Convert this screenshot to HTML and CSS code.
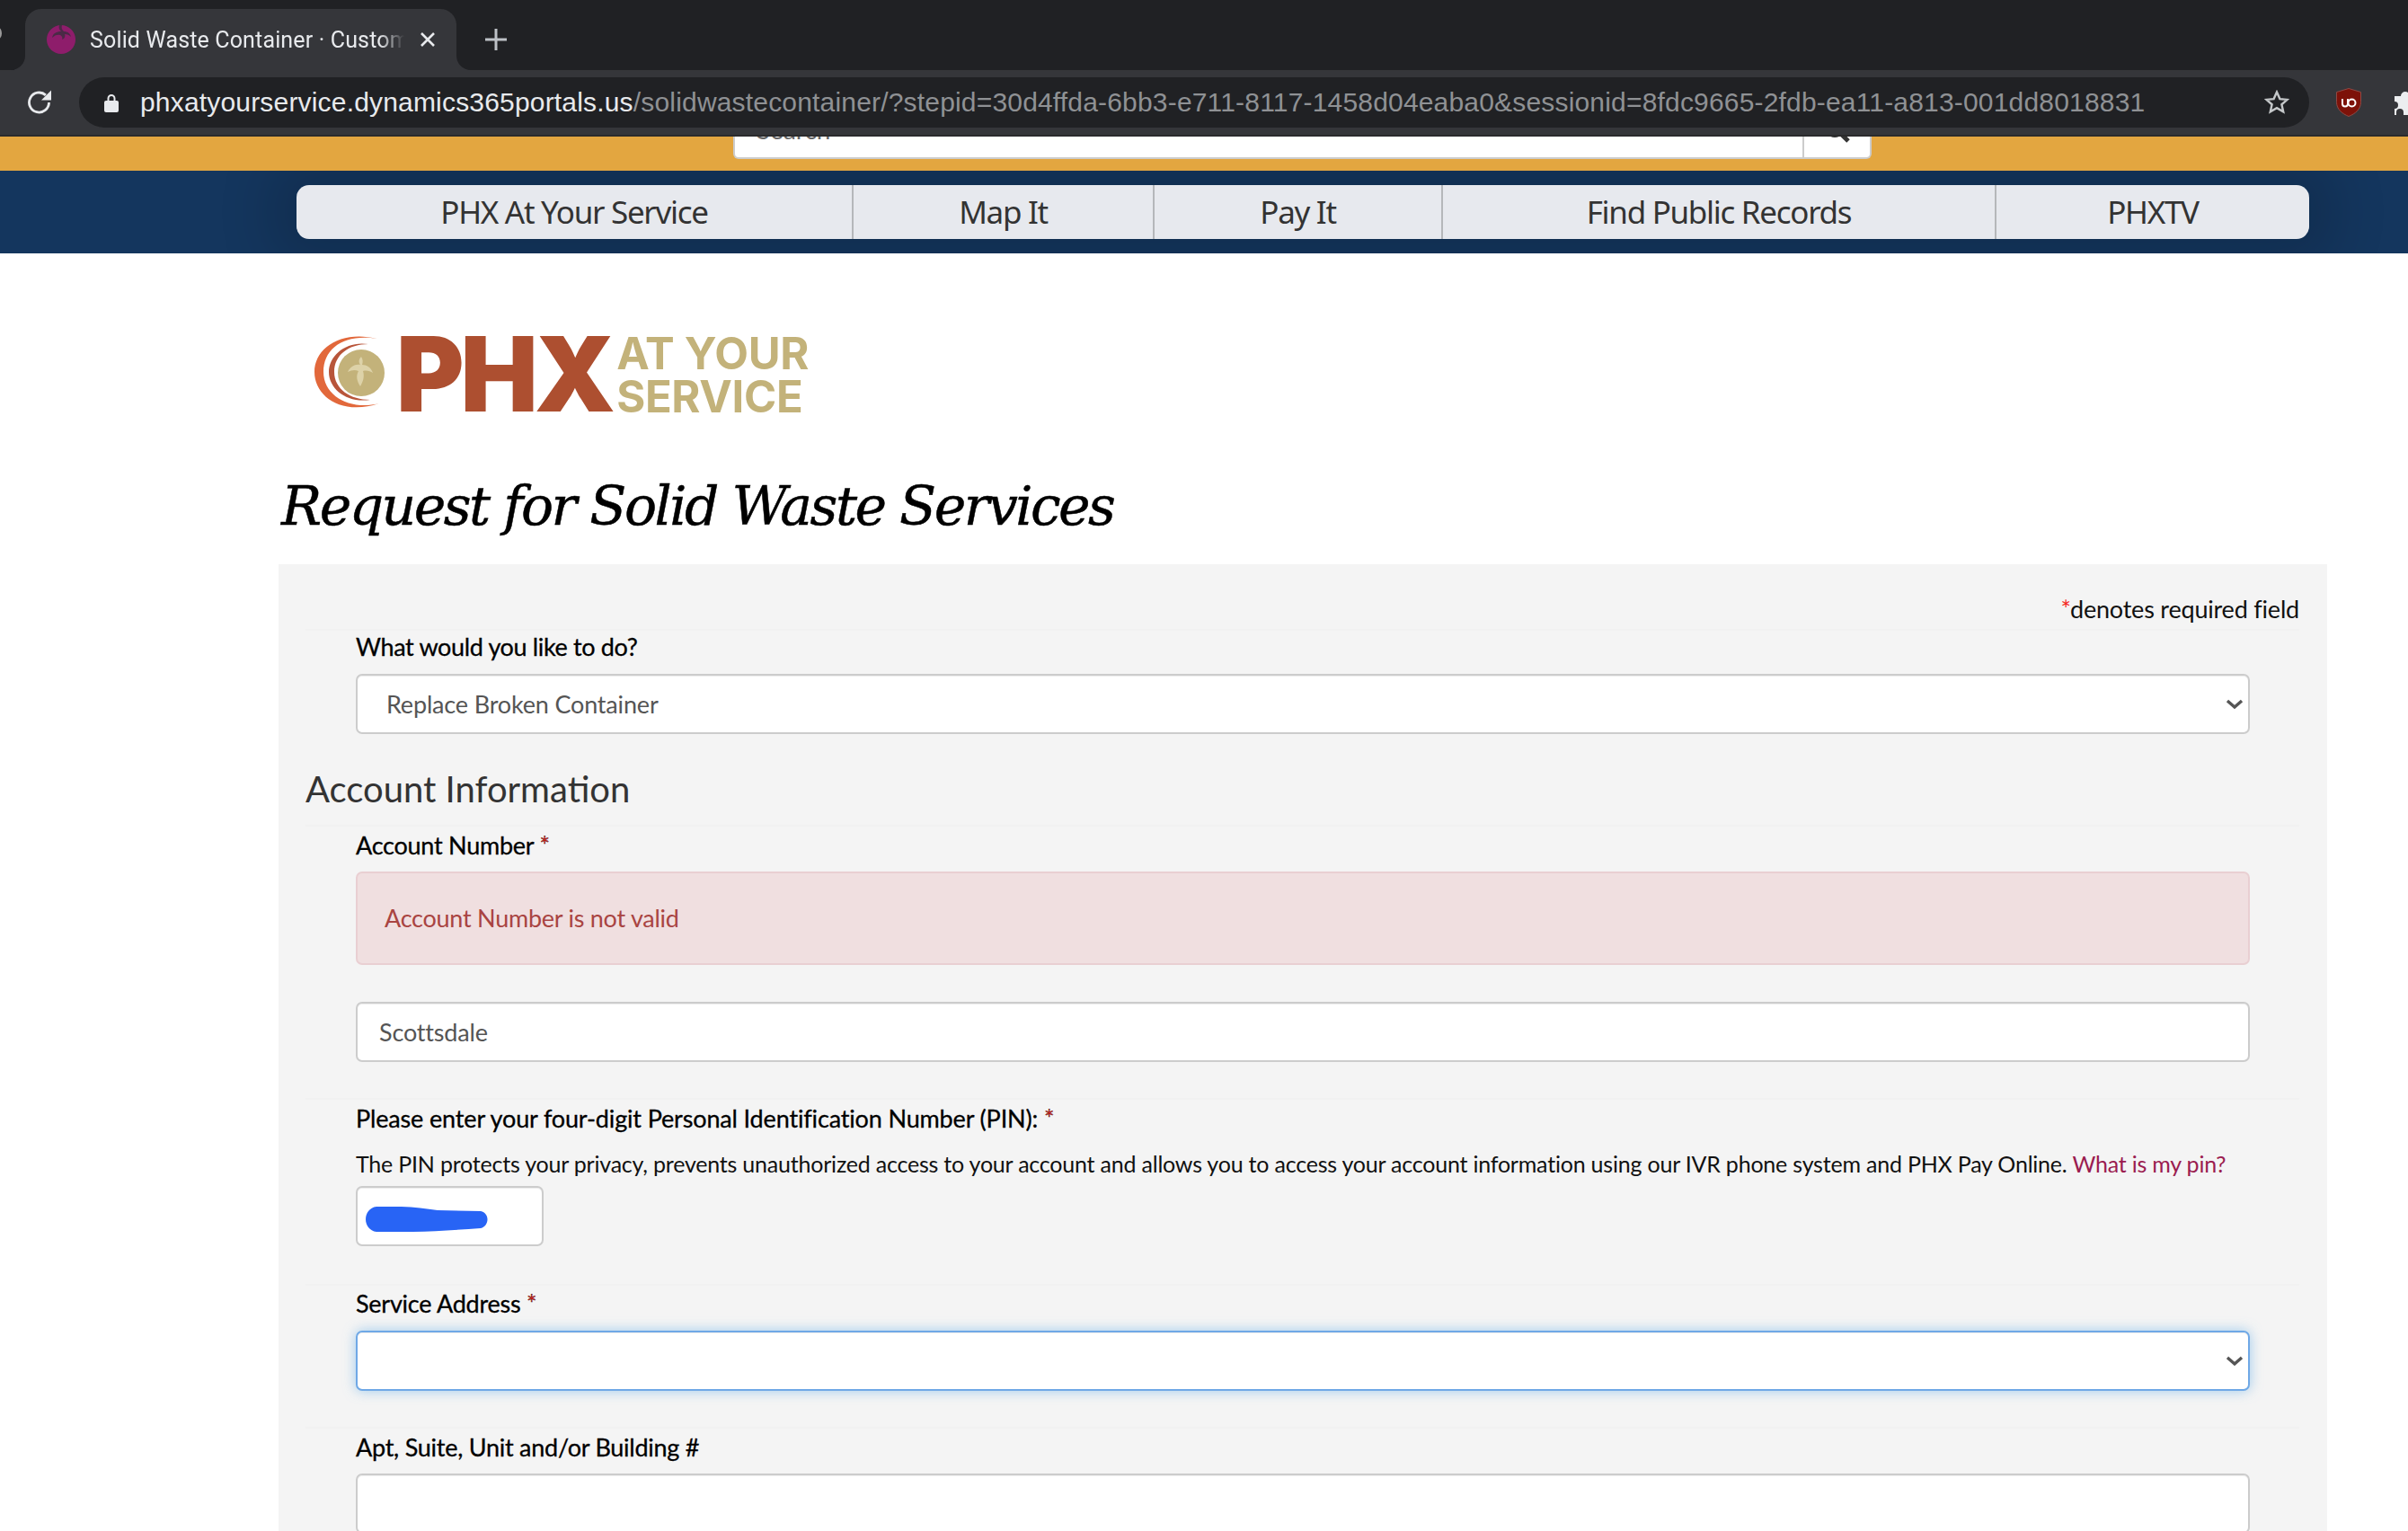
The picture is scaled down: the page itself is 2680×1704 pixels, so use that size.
FILE: index.html
```html
<!DOCTYPE html>
<html lang="en">
<head>
<meta charset="utf-8">
<title>Solid Waste Container</title>
<link rel="stylesheet" href="styles.css">
</head>
<body>
<div class="tabstrip">
  <div class="prevtab"><span class="prevfav"></span></div>
  <div class="tab">
    <svg class="favicon" viewBox="0 0 32 32"><circle cx="16" cy="16" r="16" fill="#8e1d6b"/><path d="M14 0c-1 3 0 5 2 7-5 0-9 2-10 7 3-3 6-4 9-3 2 1 3 3 2 5 3-1 4-4 3-6 3 0 5 1 7 3-1-4-4-6-8-6-2-2-3-4-2-7z" fill="#4a2a46"/></svg>
    <span class="tabtitle">Solid Waste Container · Customer Services</span>
    <svg class="tabclose" viewBox="0 0 16 16"><path d="M1 1l14 14M15 1L1 15" stroke="#e8eaed" stroke-width="2.6" fill="none"/></svg>
  </div>
  <div class="tabgap">
    <svg class="newtab" viewBox="0 0 24 24"><path d="M12 0v24M0 12h24" stroke="#bdc1c6" stroke-width="3" fill="none"/></svg>
  </div>
</div>
<div class="toolbar">
  <svg class="reload" viewBox="0 0 30 30"><path d="M24.5 15a11 11 0 1 1-3.6-8.1" fill="none" stroke="#e8eaed" stroke-width="2.8"/><path d="M27 1.5v11H16z" fill="#e8eaed"/></svg>
  <div class="omnibox">
    <svg class="lock" viewBox="0 0 16 21"><path d="M4.5 10V5.5a3.5 3.5 0 0 1 7 0V10" fill="none" stroke="#e8eaed" stroke-width="2"/><rect x="0" y="8" width="16" height="13" rx="2" fill="#e8eaed"/></svg>
    <span class="url"><span class="host">phxatyourservice.dynamics365portals.us</span>/solidwastecontainer/?stepid=30d4ffda-6bb3-e711-8117-1458d04eaba0&amp;sessionid=8fdc9665-2fdb-ea11-a813-001dd8018831</span>
    <svg class="star" viewBox="0 0 28 28"><path d="M14 2.5l3.4 7.6 8.1.8-6.1 5.4 1.8 8-7.2-4.2-7.2 4.2 1.8-8-6.1-5.4 8.1-.8z" fill="none" stroke="#c4c7c9" stroke-width="2.4"/></svg>
  </div>
  <svg class="ublock" viewBox="0 0 28 32"><path d="M14 .5l13.5 4v11c0 8-6 13-13.500 16C6.500 28.500.500 23.500.500 15.500v-11z" fill="#7d1209" stroke="#8f4a45"/><path d="M7 12v5.500a3 3 0 0 0 6 0V12" fill="none" stroke="#fff" stroke-width="2"/><circle cx="17.500" cy="16.500" r="4" fill="none" stroke="#fff" stroke-width="2"/></svg>
  <svg class="puzzle" viewBox="0 0 30 28"><path d="M1 7h7a5 5 0 0 1 10 0h7v6a4.500 4.500 0 0 1 0 9v6H11v-3a4 4 0 0 0-8 0v3H1v-7a4 4 0 0 0 0-8z" fill="#eceef0"/></svg>
</div>
<header class="goldbar">
  <div class="search">
    <span class="search-text">Search</span>
    <span class="search-btn"><svg class="search-icon" viewBox="0 0 30 30"><circle cx="12" cy="12" r="9" fill="none" stroke="#333" stroke-width="4"/><path d="M18 18l9 9" stroke="#333" stroke-width="5"/></svg></span>
  </div>
</header>
<nav class="bluebar">
  <ul class="menu">
    <li class="menu-item m1">PHX At Your Service</li>
    <li class="menu-item m2">Map It</li>
    <li class="menu-item m3">Pay It</li>
    <li class="menu-item m4">Find Public Records</li>
    <li class="menu-item m5">PHXTV</li>
  </ul>
</nav>
<main class="content">
  <div class="logo">
    <svg class="logo-mark" viewBox="0 0 80 82">
      <path d="M70 4C30-6 0 14 0 41s30 49 72 35C40 84 10 68 10 41S34-2 70 4z" fill="#e2683b"/>
      <path d="M60 10C36 6 16 22 16 41s20 35 46 31C40 72 22 60 22 41s16-31 38-31z" fill="#b8553a"/>
      <circle cx="52" cy="42" r="26" fill="#c3b27a"/>
      <path d="M52 24c-3 3-3 6-1 9-6-1-11 2-14 8 4-2 8-3 12-1-3 5-2 11 2 17 3-5 5-11 3-17 4-1 8 0 11 2-2-6-7-9-12-9 1-3 1-6-1-9z" fill="#ddd2a8"/>
    </svg>
    <span class="logo-phx">PHX</span>
    <span class="logo-tag"><span class="logo-line">AT YOUR</span><span class="logo-line">SERVICE</span></span>
  </div>
  <h1 class="title">Request for Solid Waste Services</h1>
  <section class="panel">
    <p class="required"><span class="star-red">*</span>denotes required field</p>
    <div class="row row-first">
      <label class="label">What would you like to do?</label>
      <div class="selectwrap">
        <select class="control select"><option>Replace Broken Container</option></select>
        <svg class="chevron" viewBox="0 0 20 12"><path d="M2 2l8 7 8-7" fill="none" stroke="#555" stroke-width="3.4"/></svg>
      </div>
    </div>
    <h2 class="section">Account Information</h2>
    <div class="row">
      <label class="label">Account Number <span class="star-red">*</span></label>
      <div class="alert">Account Number is not valid</div>
      <input class="control input" value="Scottsdale">
    </div>
    <div class="row row-pin">
      <label class="label">Please enter your four-digit Personal Identification Number (PIN): <span class="star-red">*</span></label>
      <p class="help">The PIN protects your privacy, prevents unauthorized access to your account and allows you to access your account information using our IVR phone system and PHX Pay Online. <a class="link" href="#">What is my pin?</a></p>
      <div class="pinwrap">
        <input class="control pin">
        <svg class="scribble" viewBox="0 0 136 28"><path d="M12 0C40-1 60 1 80 4l48 1c10 2 10 16 0 19-40 3-80 5-116 4C-4 26-4 2 12 0z" fill="#2864f5"/></svg>
      </div>
    </div>
    <div class="row row-addr">
      <label class="label">Service Address <span class="star-red">*</span></label>
      <div class="selectwrap">
        <select class="control select focus"><option></option></select>
        <svg class="chevron" viewBox="0 0 20 12"><path d="M2 2l8 7 8-7" fill="none" stroke="#555" stroke-width="3.4"/></svg>
      </div>
    </div>
    <div class="row row-apt">
      <label class="label">Apt, Suite, Unit and/or Building #</label>
      <input class="control input">
    </div>
  </section>
</main>
</body>
</html>
```
FILE: styles.css
```css
* { box-sizing: border-box; }
html, body { margin: 0; padding: 0; }
body {
  width: 2680px;
  height: 1704px;
  overflow: hidden;
  background: #fff;
  font-family: "Lato", "Noto Sans", sans-serif;
}

/* browser chrome */
.tabstrip {
  height: 78px;
  background: #202124;
  display: flex;
  align-items: flex-end;
  overflow: hidden;
}
.prevtab {
  width: 28px;
  height: 68px;
  flex: none;
  background: #202124;
  border-bottom-right-radius: 16px;
  box-shadow: 16px 16px 0 0 #35363a;
  overflow: hidden;
  padding-top: 20px;
}
.prevfav {
  display: block;
  width: 10px;
  height: 14px;
  margin-left: -8px;
  border-radius: 50%;
  background: #9a9a9a;
}
.tab {
  width: 480px;
  height: 68px;
  flex: none;
  position: relative;
  background: #35363a;
  border-radius: 18px 18px 0 0;
  display: flex;
  align-items: center;
  padding: 0 0 0 24px;
  color: #e8eaed;
}
.favicon { width: 32px; height: 32px; flex: none; }
.tabtitle {
  width: 350px;
  margin-left: 16px;
  flex: none;
  white-space: nowrap;
  overflow: hidden;
  font: 25px "Roboto", sans-serif;
  letter-spacing: .15px;
  -webkit-mask-image: linear-gradient(90deg, #000 322px, transparent 350px);
  mask-image: linear-gradient(90deg, #000 322px, transparent 350px);
}
.tabclose { width: 16px; height: 16px; margin-left: 18px; flex: none; }
.tabgap {
  flex: 1;
  height: 68px;
  background: #202124;
  border-bottom-left-radius: 16px;
  box-shadow: -16px 16px 0 0 #35363a;
  display: flex;
  align-items: center;
}
.newtab { width: 24px; height: 24px; margin-left: 32px; flex: none; }
.toolbar {
  height: 74px;
  background: #35363a;
  border-bottom: 2px solid #2a2a2c;
  display: flex;
  align-items: center;
  position: relative;
}
.reload { width: 30px; height: 30px; margin-left: 30px; flex: none; }
.omnibox {
  width: 2482px;
  height: 56px;
  flex: none;
  margin-left: 28px;
  background: #202124;
  border-radius: 28px;
  display: flex;
  align-items: center;
  padding-left: 28px;
  position: relative;
}
.lock { width: 16px; height: 21px; flex: none; }
.url {
  margin-left: 24px;
  font: 30px "Liberation Sans", sans-serif;
  letter-spacing: .18px;
  color: #8f9194;
  white-space: nowrap;
}
.host { color: #e8eaed; }
.star { width: 28px; height: 28px; position: absolute; right: 22px; top: 14px; }
.ublock { width: 28px; height: 32px; margin-left: 30px; flex: none; }
.puzzle { width: 30px; height: 28px; margin-left: 36px; flex: none; }

/* site header */
.goldbar {
  height: 38px;
  background: #e3a640;
  overflow: hidden;
  display: flex;
  align-items: flex-end;
  padding: 0 0 13px 816px;
}
.search {
  width: 1267px;
  height: 65px;
  flex: none;
  background: #fff;
  border: 2px solid #ccc;
  border-top: 0;
  border-radius: 0 0 6px 6px;
  display: flex;
  align-items: center;
  justify-content: space-between;
  font-size: 28px;
  color: #666;
}
.search-text { margin-left: 24px; }
.search-btn {
  width: 75px;
  height: 100%;
  border-left: 2px solid #ccc;
  display: flex;
  align-items: center;
  justify-content: center;
}
.search-icon { width: 30px; height: 30px; margin-top: 3px; }
.bluebar {
  height: 92px;
  background: #14365e;
  padding: 16px 0 0 330px;
  overflow: hidden;
}
.menu {
  margin: 0;
  padding: 0;
  list-style: none;
  width: 2240px;
  height: 60px;
  display: flex;
  background: #e7e9ee;
  border-radius: 14px;
  box-shadow: 0 0 60px 30px rgba(0, 0, 0, .14);
}
.menu-item {
  display: flex;
  align-items: center;
  justify-content: center;
  padding-bottom: 2px;
  font: 35px "Noto Sans", sans-serif;
  letter-spacing: -1.3px;
  color: #333;
  border-right: 2px solid #b5b7ba;
}
.m1 { width: 620px; }
.m2 { width: 335px; }
.m3 { width: 321px; }
.m4 { width: 616px; }
.m5 { width: 348px; border-right: 0; }

/* content */
.content { padding-left: 310px; width: 2590px; }
.logo {
  height: 176px;
  padding: 91px 0 0 40px;
  display: flex;
  align-items: flex-start;
}
.logo-mark { width: 80px; height: 82px; flex: none; }
.logo-phx {
  margin: -18px 0 0 11px;
  font: 900 115px/124px "Inter", sans-serif;
  color: #ad4f30;
  letter-spacing: -4px;
}
.logo-tag {
  display: flex;
  flex-direction: column;
  margin: -3px 0 0 5px;
  font: 700 49px/48px "Inter", sans-serif;
  letter-spacing: -.3px;
  color: #c3b27a;
}
.logo-line { display: block; }
.title {
  margin: 0 0 0 3px;
  height: 170px;
  padding-top: 65px;
  font: italic 400 60px/80px "DejaVu Serif", serif;
  letter-spacing: -2.5px;
  color: #000;
  -webkit-text-stroke: .5px #000;
  white-space: nowrap;
}
.panel {
  height: 1076px;
  background: #f4f4f4;
  padding: 30px 31px 0 30px;
  color: #111;
}
.required {
  margin: 0 0 2px;
  height: 40px;
  font-size: 27px;
  letter-spacing: -.2px;
  line-height: 40px;
  text-align: right;
}
.star-red { color: #f5281e; }
.row {
  border-top: 2px solid #f1f1f1;
  padding: 3px 55px 0 56px;
}
.row-first { padding-top: 0; }
.label {
  display: block;
  height: 36px;
  font-size: 27px;
  letter-spacing: -.25px;
  line-height: 36px;
  color: #000;
  -webkit-text-stroke: .3px #000;
  margin-bottom: 11px;
}
.row-first .label { margin-bottom: 12px; letter-spacing: -.35px; }
.selectwrap, .pinwrap { position: relative; }
.control {
  display: block;
  width: 100%;
  height: 67px;
  background: #fff;
  border: 2px solid #ccc;
  border-radius: 7px;
  font: 27px "Lato", sans-serif;
  letter-spacing: -.17px;
  color: #555;
  padding: 0 24px;
  outline: 0;
  box-shadow: inset 0 1px 1px rgba(0, 0, 0, .075);
}
.select {
  appearance: none;
  -webkit-appearance: none;
  padding-left: 32px;
}
.focus {
  border-color: #6fa8e6;
  box-shadow: inset 0 1px 1px rgba(0, 0, 0, .075), 0 0 14px rgba(102, 175, 233, .6);
}
.chevron {
  position: absolute;
  right: 7px;
  top: 28px;
  width: 20px;
  height: 12px;
}
.section {
  margin: 36px 0 15px;
  height: 50px;
  font: 400 40px/50px "Lato", sans-serif;
  color: #333;
}
.alert {
  height: 104px;
  margin-bottom: 41px;
  padding-left: 30px;
  background: #f0dfe0;
  border: 2px solid #e9cfd2;
  border-radius: 7px;
  color: #a94442;
  font-size: 27px;
  letter-spacing: -.25px;
  line-height: 100px;
}
.row-pin { margin-top: 40px; }
.row-pin .label { margin-bottom: 14px; letter-spacing: -.15px; }
.help {
  margin: 0 0 7px;
  height: 36px;
  line-height: 36px;
  font-size: 25px;
  letter-spacing: -.21px;
  color: #111;
  white-space: nowrap;
}
.link { color: #9b1c50; text-decoration: none; }
.pinwrap { width: 209px; height: 67px; }
.scribble {
  position: absolute;
  left: 11px;
  top: 23px;
  width: 136px;
  height: 28px;
}
.row-addr { margin-top: 42px; }
.row-addr .label { margin-top: -1px; margin-bottom: 12px; }
.row-apt { margin-top: 40px; }
```
